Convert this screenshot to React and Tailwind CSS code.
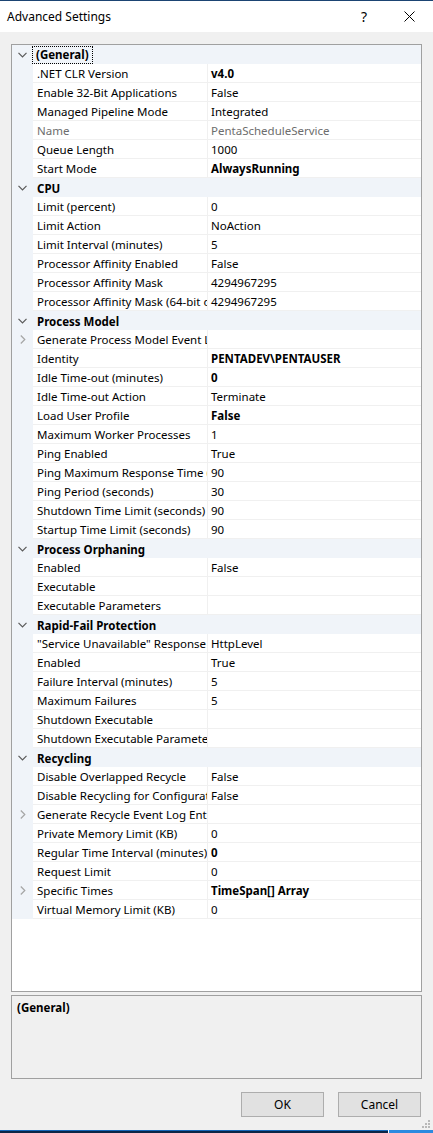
import React from 'react';

const sections = [
  {
    title: '(General)',
    focused: true,
    rows: [
      { name: '.NET CLR Version', value: 'v4.0', bold: true },
      { name: 'Enable 32-Bit Applications', value: 'False' },
      { name: 'Managed Pipeline Mode', value: 'Integrated' },
      { name: 'Name', value: 'PentaScheduleService', disabled: true },
      { name: 'Queue Length', value: '1000' },
      { name: 'Start Mode', value: 'AlwaysRunning', bold: true },
    ],
  },
  {
    title: 'CPU',
    rows: [
      { name: 'Limit (percent)', value: '0' },
      { name: 'Limit Action', value: 'NoAction' },
      { name: 'Limit Interval (minutes)', value: '5' },
      { name: 'Processor Affinity Enabled', value: 'False' },
      { name: 'Processor Affinity Mask', value: '4294967295' },
      { name: 'Processor Affinity Mask (64-bit option)', value: '4294967295' },
    ],
  },
  {
    title: 'Process Model',
    rows: [
      { name: 'Generate Process Model Event Log Entry', value: '', expandable: true },
      { name: 'Identity', value: 'PENTADEV\\PENTAUSER', bold: true },
      { name: 'Idle Time-out (minutes)', value: '0', bold: true },
      { name: 'Idle Time-out Action', value: 'Terminate' },
      { name: 'Load User Profile', value: 'False', bold: true },
      { name: 'Maximum Worker Processes', value: '1' },
      { name: 'Ping Enabled', value: 'True' },
      { name: 'Ping Maximum Response Time (seconds)', value: '90' },
      { name: 'Ping Period (seconds)', value: '30' },
      { name: 'Shutdown Time Limit (seconds)', value: '90' },
      { name: 'Startup Time Limit (seconds)', value: '90' },
    ],
  },
  {
    title: 'Process Orphaning',
    rows: [
      { name: 'Enabled', value: 'False' },
      { name: 'Executable', value: '' },
      { name: 'Executable Parameters', value: '' },
    ],
  },
  {
    title: 'Rapid-Fail Protection',
    rows: [
      { name: '"Service Unavailable" Response Type', value: 'HttpLevel' },
      { name: 'Enabled', value: 'True' },
      { name: 'Failure Interval (minutes)', value: '5' },
      { name: 'Maximum Failures', value: '5' },
      { name: 'Shutdown Executable', value: '' },
      { name: 'Shutdown Executable Parameters', value: '' },
    ],
  },
  {
    title: 'Recycling',
    rows: [
      { name: 'Disable Overlapped Recycle', value: 'False' },
      { name: 'Disable Recycling for Configuration Changes', value: 'False' },
      { name: 'Generate Recycle Event Log Entry', value: '', expandable: true },
      { name: 'Private Memory Limit (KB)', value: '0' },
      { name: 'Regular Time Interval (minutes)', value: '0', bold: true },
      { name: 'Request Limit', value: '0' },
      { name: 'Specific Times', value: 'TimeSpan[] Array', bold: true, expandable: true },
      { name: 'Virtual Memory Limit (KB)', value: '0' },
    ],
  },
];

function ChevronDown() {
  return (
    <svg width="9" height="6" viewBox="0 0 9 6">
      <path d="M0.5 0.8 L4.5 4.8 L8.5 0.8" fill="none" stroke="#5a5a5a" strokeWidth="1.2" />
    </svg>
  );
}

function ChevronRight() {
  return (
    <svg width="6" height="9" viewBox="0 0 6 9">
      <path d="M0.8 0.5 L4.8 4.5 L0.8 8.5" fill="none" stroke="#a5a5a5" strokeWidth="1.2" />
    </svg>
  );
}

function Header({ title, focused }) {
  return (
    <div className="flex h-[19px] overflow-hidden bg-[#f0f4f9]">
      <div className="flex w-[21px] shrink-0 items-center justify-center pt-[1px]">
        <ChevronDown />
      </div>
      {focused ? (
        <div className="flex items-center pt-[1px]">
          <span className="px-[3px] leading-[16px] font-bold outline-1 outline-dotted outline-black">
            {title}
          </span>
        </div>
      ) : (
        <span className="pl-[4px] leading-[22px] font-bold">{title}</span>
      )}
    </div>
  );
}

function Row({ name, value, bold, disabled, expandable }) {
  const color = disabled ? 'text-[#6d6d6d]' : 'text-black';
  return (
    <div className="flex h-[19px]">
      <div className="flex w-[21px] shrink-0 items-center justify-center bg-[#f0f4f9]">
        {expandable && <ChevronRight />}
      </div>
      <div className={`w-[175px] shrink-0 overflow-hidden whitespace-nowrap border-r border-b border-[#f0f0f0] pl-[4px] leading-[20px] ${color}`}>
        {name}
      </div>
      <div className={`flex-1 overflow-hidden whitespace-nowrap border-b border-[#f0f0f0] pl-[3px] leading-[20px] ${color} ${bold ? 'font-bold' : ''}`}>
        {value}
      </div>
    </div>
  );
}

export default function App() {
  return (
    <div className="flex h-[1133px] w-[433px] flex-col bg-[#f0f0f0] font-['Noto_Sans',sans-serif] text-[11.5px] text-black">
      {/* title bar */}
      <div className="h-[32px] shrink-0 border-t border-[#1b4473] bg-white text-[12px]">
        <div className="flex h-full items-center pl-[7px]">
          <span className="flex-1">Advanced Settings</span>
          <span className="mr-[37px] text-[14px]">?</span>
          <svg width="11" height="11" viewBox="0 0 11 11" className="mr-[18px]">
            <path d="M0.5 0.5 L10.5 10.5 M10.5 0.5 L0.5 10.5" stroke="#000" strokeWidth="1" />
          </svg>
        </div>
      </div>

      <div className="flex flex-1 flex-col px-[11px] pt-[12px]">
        {/* property grid */}
        <div className="h-[948px] shrink-0 border border-[#a0a0a0] bg-white">
          {sections.map(s => (
            <div key={s.title}>
              <Header title={s.title} focused={s.focused} />
              {s.rows.map(r => (
                <Row key={s.title + r.name} {...r} />
              ))}
            </div>
          ))}
        </div>

        {/* description */}
        <div className="mt-[3px] h-[84px] shrink-0 border border-[#a0a0a0] bg-[#f0f0f0] px-[5px] pt-[3px]">
          <span className="font-bold">(General)</span>
        </div>

        {/* buttons */}
        <div className="mt-[13px] flex justify-end gap-[14px] pr-[1px] text-[12px]">
          <button className="h-[25px] w-[83px] border border-[#adadad] bg-[#e1e1e1]">OK</button>
          <button className="h-[25px] w-[83px] border border-[#adadad] bg-[#e1e1e1]">Cancel</button>
        </div>
      </div>

      {/* resize grip + taskbar edge */}
      <div className="flex h-[13px] shrink-0 items-end justify-end pr-[2px] pb-[1px]">
        <svg width="9" height="9" viewBox="0 0 9 9">
          <rect x="6" y="0" width="2" height="2" fill="#b8b8b8" />
          <rect x="3" y="3" width="2" height="2" fill="#b8b8b8" />
          <rect x="6" y="3" width="2" height="2" fill="#b8b8b8" />
          <rect x="0" y="6" width="2" height="2" fill="#b8b8b8" />
          <rect x="3" y="6" width="2" height="2" fill="#b8b8b8" />
          <rect x="6" y="6" width="2" height="2" fill="#b8b8b8" />
        </svg>
      </div>
      <div className="flex h-[3px] shrink-0">
        <div className="w-[388px] border-t border-[#1466b8] bg-[#0b2546]" />
        <div className="w-[1px] bg-white" />
        <div className="flex-1 bg-[#2b8ae0]" />
      </div>
    </div>
  );
}
